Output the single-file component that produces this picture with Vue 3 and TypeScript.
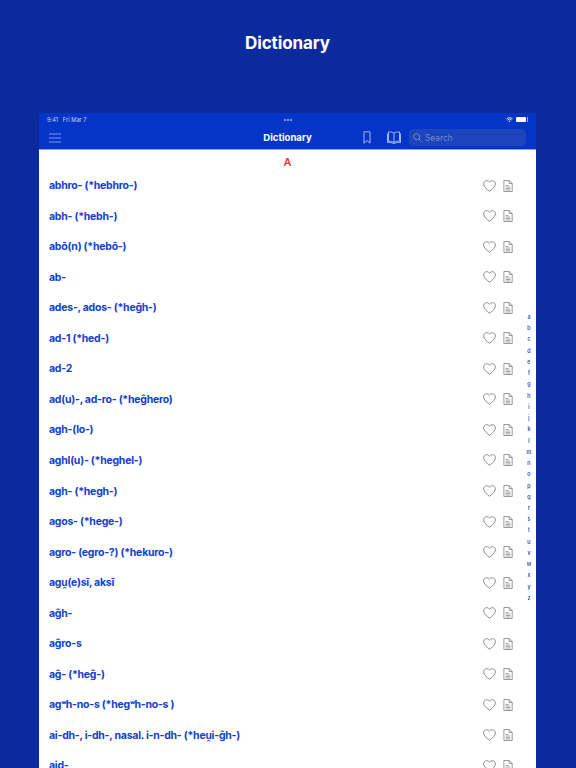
<script setup lang="ts">
const entries = [
  'abhro- (*hebhro-)',
  'abh- (*hebh-)',
  'abō(n) (*hebō-)',
  'ab-',
  'ades-, ados- (*heĝh-)',
  'ad-1 (*hed-)',
  'ad-2',
  'ad(u)-, ad-ro- (*heĝhero)',
  'agh-(lo-)',
  'aghl(u)- (*heghel-)',
  'agh- (*hegh-)',
  'agos- (*hege-)',
  'agro- (egro-?) (*hekuro-)',
  'agu̯(e)sī, aksī',
  'aĝh-',
  'aĝro-s',
  'aĝ- (*heĝ-)',
  'agʷh-no-s (*hegʷh-no-s )',
  'ai-dh-, i-dh-, nasal. i-n-dh- (*heu̯i-ĝh-)',
  'aid-',
]

const letters = 'abcdefghijklmnopqrstuvwxyz'.split('')

// the labialised ʷ comes out too wide from the fallback font, so it gets its own size
function parts(entry: string) {
  return entry.split(/(ʷ)/)
}
</script>

<template>
  <div class="page">
    <h1 class="title">Dictionary</h1>
    <div class="device">
      <div class="topbar">
        <div class="status">
          <span class="time">9:41&nbsp;&nbsp;&nbsp;Fri Mar 7</span>
          <span class="dots"><i /><i /><i /></span>
          <span class="status-right">
            <svg width="7" height="5.500" viewBox="0 0 9 7" fill="none" stroke="#fff">
              <path d="M.6 2.3a5.6 5.6 0 0 1 7.8 0" stroke-width="1.1" />
              <path d="M2 3.8a3.6 3.6 0 0 1 5 0" stroke-width="1.1" />
              <path d="M4.5 6.6 3.2 5.2a1.9 1.9 0 0 1 2.6 0z" fill="#fff" stroke="none" />
            </svg>
            <span class="battery"><span class="battery-fill" /></span>
          </span>
        </div>
        <div class="nav">
          <svg class="menu" width="12" height="10" viewBox="0 0 12 10" stroke="#9db4ea" stroke-width=".8">
            <path d="M0 1h12M0 5h12M0 9h12" />
          </svg>
          <span class="nav-title">Dictionary</span>
          <div class="nav-right">
            <svg class="bookmark" width="8" height="13" viewBox="0 0 8 13" fill="none" stroke="#a3b8ec" stroke-width="1">
              <path d="M1 .8h6v11.400L4 9.600 1 12.200z" />
            </svg>
            <svg class="book" width="14" height="13" viewBox="0 0 14 13" fill="none" stroke="#a3b8ec" stroke-width="1">
              <path d="M7 2.300C5.800 1 3.700.8 1.500 1v9.300c2.200-.2 4.300 0 5.500 1.200 1.200-1.200 3.300-1.400 5.500-1.200V1C10.300.8 8.200 1 7 2.300zM7 2.300v9.200M.5 2.500v9c2-.2 4.500-.1 5.500.8h2c1-.9 3.500-1 5.500-.8v-9" />
            </svg>
            <div class="search">
              <svg width="9" height="9" viewBox="0 0 9 9" fill="none" stroke="#7288cb" stroke-width="1">
                <circle cx="3.700" cy="3.700" r="3" />
                <path d="m5.900 5.900 2.600 2.600" />
              </svg>
              <span>Search</span>
            </div>
          </div>
        </div>
      </div>

      <div class="content">
        <div class="section">A</div>
        <ul class="list">
          <li v-for="entry in entries" :key="entry" class="row">
            <span class="word">
              <template v-for="(part, i) in parts(entry)" :key="i">
                <span v-if="part === 'ʷ'" class="labial">{{ part }}</span>
                <template v-else>{{ part }}</template>
              </template>
            </span>
            <span class="actions">
              <svg width="13" height="12" viewBox="0 0 13 12" fill="none" stroke="#808080" stroke-width=".9">
                <path d="M6.500 11.300C4.600 9.700.6 7.100.6 3.900.6 2 2 .7 3.600.7c1.200 0 2.300.6 2.900 1.700C7.100 1.300 8.200.7 9.400.7c1.600 0 3 1.300 3 3.200 0 3.200-4 5.800-5.900 7.400z" />
              </svg>
              <svg width="10" height="12" viewBox="0 0 10 12" fill="none" stroke="#808080" stroke-width=".8">
                <path d="M.9.500h5.300l3 3v8H.9z" />
                <path d="M6.200.5v3h3" />
                <path d="M2.600 5.500h3M2.600 7h4.800M2.600 8.500h4.800M2.600 10h4.800" stroke-width=".7" />
              </svg>
            </span>
          </li>
        </ul>
        <div class="index">
          <span v-for="l in letters" :key="l">{{ l }}</span>
        </div>
      </div>
    </div>
  </div>
</template>

<style>
html,
body {
  margin: 0;
  overflow: hidden;
}
</style>

<style scoped>
.page {
  height: 768px;
  overflow: hidden;
  background: #0b2a9e;
  padding-left: 39px;
  display: flex;
  flex-direction: column;
}

.page * {
  font-family: Inter, "Liberation Sans", sans-serif;
}

.title {
  flex: none;
  width: 497px;
  margin: 33px 0 0;
  height: 80px;
  line-height: 21px;
  text-align: center;
  font-size: 17px;
  font-weight: 700;
  letter-spacing: -0.1px;
  color: #fff;
}

.device {
  width: 497px;
  flex: none;
  background: #fff;
}

.topbar {
  background: #0435c8;
  border-bottom: 1px solid #8aa3e8;
  color: #fff;
}

.status {
  height: 13px;
  padding: 0 8px;
  display: grid;
  grid-template-columns: 1fr auto 1fr;
  align-items: center;
  font-size: 5.700px;
  color: #c4d0f2;
}

.dots {
  display: flex;
  gap: 1px;
}

.dots i {
  width: 2px;
  height: 2px;
  border-radius: 50%;
  background: #a9baec;
}

.status-right {
  display: flex;
  justify-content: flex-end;
  align-items: center;
  gap: 3px;
}

.battery {
  width: 12px;
  height: 5px;
  padding: 0 1px 0 0;
  box-sizing: border-box;
  border-right: 1px solid #8ea4e6;
}

.battery-fill {
  display: block;
  height: 100%;
  background: #fff;
  border-radius: 1px;
}

.nav {
  height: 23px;
  position: relative;
  display: flex;
  align-items: center;
  justify-content: space-between;
  padding: 0 10px;
}

.nav-title {
  position: absolute;
  left: 0;
  right: 0;
  text-align: center;
  font-size: 9.600px;
  font-weight: 700;
  pointer-events: none;
}

.nav-right {
  display: flex;
  align-items: center;
}

.book {
  margin-left: 16px;
}

.search {
  margin-left: 8px;
  width: 117px;
  height: 17px;
  box-sizing: border-box;
  padding-left: 4px;
  display: flex;
  align-items: center;
  gap: 3px;
  background: #1c44bd;
  border-radius: 4px;
  font-size: 8.300px;
  color: #7288cb;
}

.content {
  position: relative;
}

.section {
  height: 20.300px;
  padding-top: 6px;
  box-sizing: border-box;
  line-height: 13px;
  text-align: center;
  font-size: 11px;
  font-weight: 600;
  color: #e8392f;
}

.list {
  list-style: none;
  margin: 0;
  padding: 0;
}

.row {
  height: 30.560px;
  display: flex;
  align-items: center;
  justify-content: space-between;
  padding: 0 23px 0 10px;
}

.word {
  font-size: 10.500px;
  font-weight: 700;
  letter-spacing: -0.24px;
  color: #0f40cf;
}

.labial {
  font-size: 9px;
  letter-spacing: -0.9px;
}

.actions {
  display: flex;
  align-items: center;
  gap: 7px;
}

.index {
  position: absolute;
  top: 162px;
  right: 2px;
  width: 10px;
  display: flex;
  flex-direction: column;
  align-items: center;
  font-size: 5.500px;
  font-weight: 600;
  line-height: 11.240px;
  color: #2a57d6;
  will-change: transform;
}
</style>
